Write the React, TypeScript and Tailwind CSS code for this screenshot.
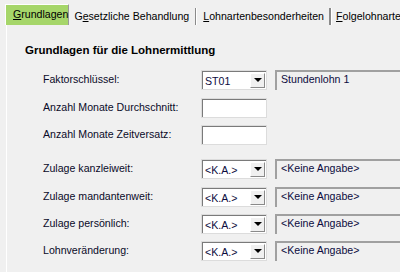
const Combo = ({ value }: { value: string }) => (
  <div className="flex h-[20px] w-[66px] items-stretch border border-[#dcdcdc] bg-white">
    <div className="flex flex-1 items-stretch border-l border-t border-[#7a7a7a]">
      <span className="flex flex-1 items-end pb-[2px] pl-[2px] leading-none text-[#0c0c40]">{value}</span>
      <div className="my-[1px] mr-[1px] flex w-[15px] items-center justify-center border border-t-white border-l-white border-r-[#8a8a8a] border-b-[#8a8a8a] bg-[#f0f0f0]">
        <div className="h-0 w-0 border-x-[4px] border-t-[4px] border-x-transparent border-t-black" />
      </div>
    </div>
  </div>
);

const TextBox = () => (
  <div className="h-[20px] w-[66px] border border-[#dcdcdc] bg-white">
    <div className="h-full border-l border-t border-[#7a7a7a]" />
  </div>
);

const Display = ({ text }: { text: string }) => (
  <div className="ml-[8px] h-[20px] flex-1 border-l-2 border-t-2 border-l-[#a0a0a0] border-t-[#a0a0a0] bg-[#f0f0f0] pl-[4px] pt-[2px] leading-none text-[#0c0c40]">
    {text}
  </div>
);

const Row = ({ label, top, children }: { label: string; top: string; children?: React.ReactNode }) => (
  <div className={`flex h-[20px] items-center ${top}`}>
    <span className="w-[158px] text-[#0a0a28]">{label}</span>
    {children}
  </div>
);

export default function App() {
  return (
    <div
      className="h-[272px] w-[400px] overflow-hidden bg-[#f0f0f0] text-[10.6px] text-black"
      style={{ fontFamily: '"Liberation Sans", Arial, sans-serif' }}
    >
      <div className="flex h-[25px] items-end whitespace-nowrap pl-[5px]">
        <div className="flex h-[21px] w-[68px] items-center border-l border-t border-r border-white border-r-[#9a9a9a] bg-[#a6d66a] pl-[7px]">
          <span><u>G</u>rundlagen</span>
        </div>
        <div className="flex h-[17px] items-center border-r border-[#8a8a8a] pl-[5px] pr-[6px] shadow-[1px_0_0_#ffffff]">
          <span>G<u>e</u>setzliche Behandlung</span>
        </div>
        <div className="flex h-[17px] items-center border-r-2 border-[#8a8a8a] pl-[7px] pr-[5px] shadow-[1px_0_0_#ffffff]">
          <span><u>L</u>ohnartenbesonderheiten</span>
        </div>
        <div className="flex h-[17px] items-center pl-[5px]">
          <span><u>F</u>olgelohnarten</span>
        </div>
      </div>
      <div className="ml-[6px] flex h-[247px] flex-col border-l border-white">
        <div className="pl-[18px] pt-[20px] text-[11.5px] font-bold leading-none">
          Grundlagen für die Lohnermittlung
        </div>
        <div className="flex flex-col pl-[36px]">
          <Row label="Faktorschlüssel:" top="mt-[13px]">
            <Combo value="ST01" />
            <Display text="Stundenlohn 1" />
          </Row>
          <Row label="Anzahl Monate Durchschnitt:" top="mt-[8px]">
            <TextBox />
          </Row>
          <Row label="Anzahl Monate Zeitversatz:" top="mt-[7px]">
            <TextBox />
          </Row>
          <Row label="Zulage kanzleiweit:" top="mt-[14px]">
            <Combo value="<K.A.>" />
            <Display text="<Keine Angabe>" />
          </Row>
          <Row label="Zulage mandantenweit:" top="mt-[8px]">
            <Combo value="<K.A.>" />
            <Display text="<Keine Angabe>" />
          </Row>
          <Row label="Zulage persönlich:" top="mt-[7px]">
            <Combo value="<K.A.>" />
            <Display text="<Keine Angabe>" />
          </Row>
          <Row label="Lohnveränderung:" top="mt-[7px]">
            <Combo value="<K.A.>" />
            <Display text="<Keine Angabe>" />
          </Row>
        </div>
      </div>
    </div>
  );
}
